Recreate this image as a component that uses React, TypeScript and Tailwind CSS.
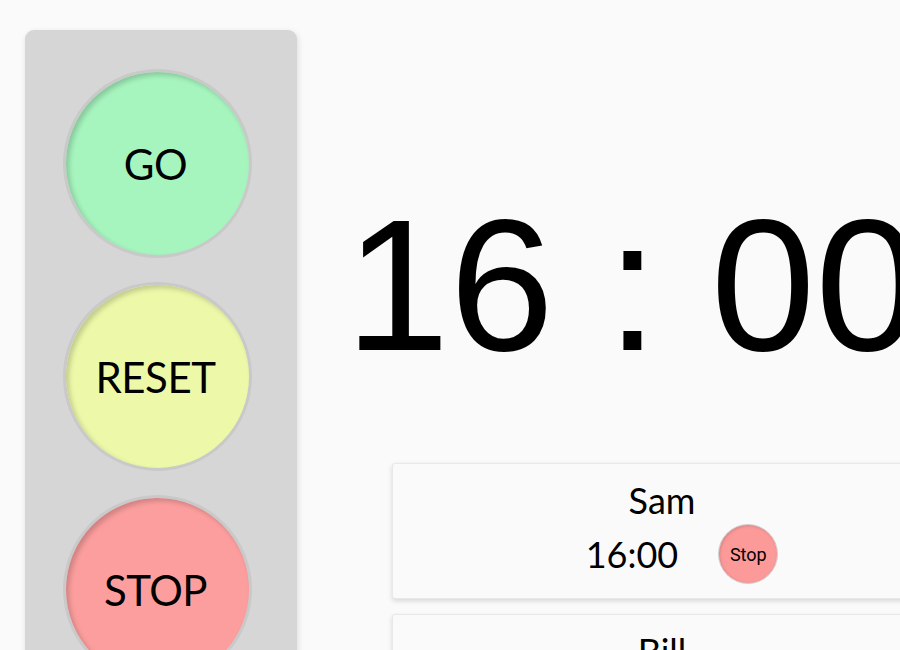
import React from 'react';

const lights = [
  { label: 'GO', bg: 'bg-[#a6f4be]' },
  { label: 'RESET', bg: 'bg-[#edf9a9]' },
  { label: 'STOP', bg: 'bg-[#fc9e9e]' },
];

const people = [
  { name: 'Sam', time: '16:00' },
  { name: 'Bill', time: '16:00' },
];

const App: React.FC = () => {
  return (
    <div className="flex w-[900px] h-[650px] overflow-hidden bg-[#fafafa] font-['Lato',sans-serif] text-black">
      {/* Traffic light controls */}
      <div className="ml-[25px] mt-[30px] w-[272px] shrink-0 rounded-[9px] bg-[#d6d6d6] shadow-[1px_2px_6px_rgba(0,0,0,0.12)] pt-[39px] pb-10 pl-[38px] flex flex-col items-start gap-[24px] h-[700px]">
        {lights.map((l) => (
          <button
            key={l.label}
            className={`w-[189px] h-[189px] shrink-0 rounded-full border-[3px] border-[#c9c9c9] ${l.bg} shadow-[inset_3px_3px_5px_rgba(0,0,0,0.18)] flex items-center justify-center text-[42px] leading-none tracking-[-0.5px] pr-1`}
          >
            {l.label}
          </button>
        ))}
      </div>

      {/* Timer + list */}
      <div className="flex-1 flex flex-col min-w-0">
        <div className="ml-[48px] mt-[191px] text-[188px] leading-none whitespace-nowrap font-['Liberation_Sans',Arial,sans-serif]">
          16 : 00
        </div>

        <div className="ml-[95px] mt-[84px] w-[540px] shrink-0 flex flex-col gap-[15px]">
          {people.map((p) => (
            <div
              key={p.name}
              className="h-[136px] shrink-0 rounded-[3px] border border-[#e8e8e8] bg-[#fafafa] shadow-[0_2px_5px_rgba(0,0,0,0.14)] flex flex-col items-center pt-[14px]"
            >
              <div className="text-[36px] leading-[44px]">{p.name}</div>
              <div className="flex items-center justify-center pl-[40px] gap-[40px] mt-[2px]">
                <span className="text-[36px] leading-[44px]">{p.time}</span>
                <button className="w-[60px] h-[60px] rounded-full bg-[#fc9a9a] border border-[#d0d0d0] shadow-[inset_1px_1px_3px_rgba(0,0,0,0.15)] text-[18px] font-['Roboto',sans-serif] flex items-center justify-center">
                  Stop
                </button>
              </div>
            </div>
          ))}
        </div>
      </div>
    </div>
  );
};

export default App;
